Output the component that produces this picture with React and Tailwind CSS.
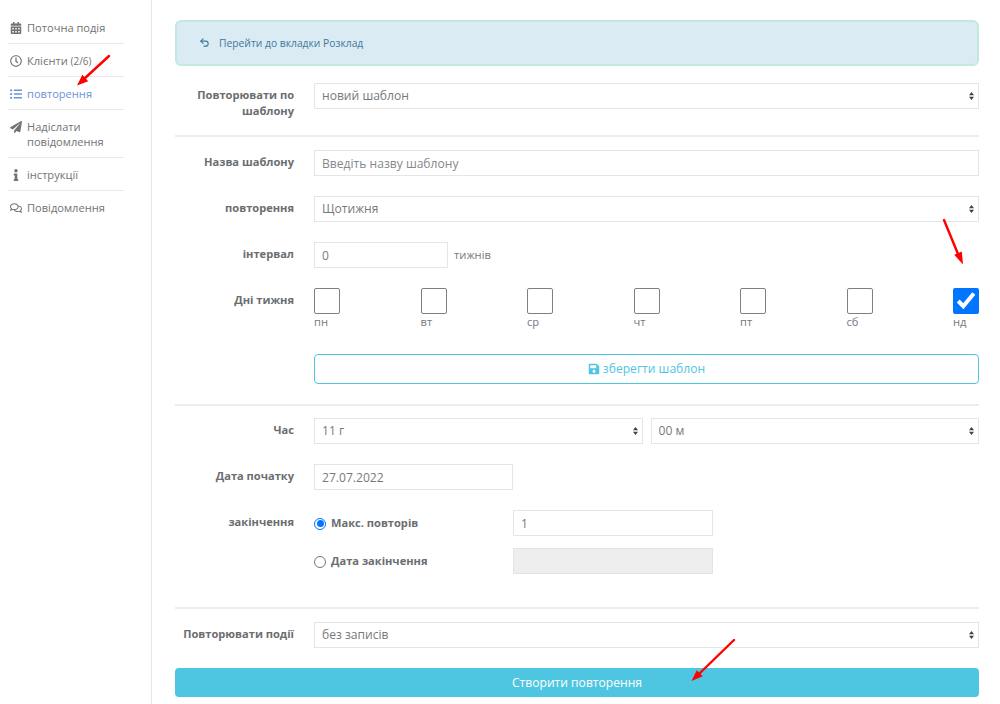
import { useState } from 'react'
import clsx from 'clsx'
import {
  FaCalendarAlt,
  FaInfo,
  FaListUl,
  FaPaperPlane,
  FaRegClock,
  FaRegComments,
  FaSave,
} from 'react-icons/fa'
import { Undo2 } from 'lucide-react'

const NAV_ITEMS = [
  { label: 'Поточна подія', icon: FaCalendarAlt, height: 'h-[33px]' },
  { label: 'Клієнти', note: '(2/6)', icon: FaRegClock, height: 'h-[33px]' },
  { label: 'повторення', icon: FaListUl, height: 'h-[33px]', active: true },
  { label: 'Надіслати повідомлення', icon: FaPaperPlane, height: 'h-[48px]' },
  { label: 'інструкції', icon: FaInfo, height: 'h-[33px]' },
  { label: 'Повідомлення', icon: FaRegComments, height: 'h-[33px]' },
]

const DAYS = ['пн', 'вт', 'ср', 'чт', 'пт', 'сб', 'нд']

const FIELD = 'block h-[26px] border border-[#e6e6e6] bg-white px-[7px] text-[12.1px] text-[#76797c] outline-none'

function Sidebar() {
  return (
    <nav className="w-[152px] shrink-0 border-r border-[#e7e7e7] pt-[11px] pl-2">
      <ul className="w-[116px]">
        {NAV_ITEMS.map(({ label, note, icon: Icon, height, active }) => (
          <li
            key={label}
            className={clsx(
              'flex border-b border-[#e9e9e9] pt-[9px] text-[11.1px] leading-[15px] last:border-b-0',
              height,
              active ? 'text-[#6f93d2]' : 'text-[#707376]',
            )}
          >
            <span className="flex h-[15px] w-[19px] shrink-0 items-center pl-0.5">
              <span className="flex w-3 justify-center">
                <Icon size={12} />
              </span>
            </span>
            <span>
              {label} {note ? <span className="text-[9.9px]">{note}</span> : null}
            </span>
          </li>
        ))}
      </ul>
    </nav>
  )
}

function Row({ label, className, children }) {
  return (
    <div className={clsx('flex', className)}>
      <div className="w-[119px] shrink-0 pt-1 text-right text-[11.1px] leading-4 font-bold text-[#6b6e71]">
        {label}
      </div>
      <div className="ml-5 min-w-0 flex-1">{children}</div>
    </div>
  )
}

function Select({ value }) {
  return (
    <div className="relative flex-1">
      <select className={clsx(FIELD, 'w-full appearance-none pt-px')} defaultValue={value}>
        <option>{value}</option>
      </select>
      <svg className="pointer-events-none absolute top-[9px] right-[5px]" width="5" height="8" viewBox="0 0 5 8" fill="#3f4245">
        <path d="M2.5 0 5 3.3H0zM2.5 8 0 4.7h5z" />
      </svg>
    </div>
  )
}

function DayBox({ label, checked, onToggle }) {
  return (
    <label className="block w-[26px] text-[11.2px] leading-4 text-[#76797c]">
      <input type="checkbox" className="peer sr-only" checked={checked} onChange={onToggle} />
      <span
        className={clsx(
          'flex h-[26px] w-[26px] items-center justify-center rounded-[2px]',
          checked ? 'bg-[#0075ff]' : 'border border-[#808080] bg-white',
        )}
      >
        {checked ? (
          <svg width="26" height="26" viewBox="0 0 26 26" fill="none" stroke="#fff" strokeWidth="4">
            <path d="M5.2 13 10.3 18.2 20.8 5.4" />
          </svg>
        ) : null}
      </span>
      <span className="block">{label}</span>
    </label>
  )
}

function Radio({ label, checked, onChange }) {
  return (
    <label className="flex w-[199px] items-center pt-px text-[11.1px] font-bold text-[#6b6e71]">
      <input type="radio" name="ending" className="sr-only" checked={checked} onChange={onChange} />
      <span
        className={clsx(
          'mr-[5px] flex h-3 w-3 items-center justify-center rounded-full border',
          checked ? 'border-[#0075ff]' : 'border-[#767676]',
        )}
      >
        {checked ? <span className="h-[7px] w-[7px] rounded-full bg-[#0075ff]" /> : null}
      </span>
      {label}
    </label>
  )
}

function Divider({ className }) {
  return <div className={clsx('h-0.5 bg-[#ececec]', className)} />
}

// Red pointers drawn over the page
function Arrows() {
  return (
    <svg
      className="pointer-events-none absolute inset-0"
      width="1000"
      height="704"
      viewBox="0 0 1000 704"
      fill="#fe0000"
      stroke="#fe0000"
      strokeLinecap="round"
    >
      <path d="M109 56 84 79M944 220 958 254M734 640 700 673" strokeWidth="2.4" />
      <path d="M77 85.5 82.4 74.8 88.2 81.2zM963 264.5 954.2 254.8 961.8 251.6zM691.5 681 696.8 670.2 702.7 676.2z" stroke="none" />
    </svg>
  )
}

function App() {
  const [days, setDays] = useState(['нд'])
  const [ending, setEnding] = useState('count')

  const toggleDay = (day) => {
    setDays((prev) => (prev.includes(day) ? prev.filter((d) => d !== day) : [...prev, day]))
  }

  return (
    <div className="relative flex h-[704px] w-[1000px] overflow-hidden bg-white font-['Open_Sans',sans-serif]">
      <Sidebar />

      <main className="ml-[23px] w-[804px] pt-5">
        <a
          href="#schedule"
          className="flex h-[46px] items-center rounded-md border-2 border-[#c3e8e0] bg-[#dbebf4] pl-[22px] text-[10.3px] text-[#41799b]"
        >
          <Undo2 size={11} strokeWidth={2.4} className="mr-[9px] mb-0.5" />
          <span className="pt-0.5">Перейти до вкладки Розклад</span>
        </a>

        <Row label="Повторювати по шаблону" className="mt-[17px] h-[26px]">
          <Select value="новий шаблон" />
        </Row>

        <Divider className="mt-[26px]" />

        <Row label="Назва шаблону" className="mt-[13px]">
          <input className={clsx(FIELD, 'w-full placeholder:text-[#85888a]')} placeholder="Введіть назву шаблону" />
        </Row>
        <Row label="повторення" className="mt-5">
          <Select value="Щотижня" />
        </Row>
        <Row label="інтервал" className="mt-5">
          <div className="flex items-center text-[11.2px] text-[#76797c]">
            <input className={clsx(FIELD, 'mr-1.5 w-[134px]')} defaultValue="0" />
            тижнів
          </div>
        </Row>
        <Row label="Дні тижня" className="mt-5">
          <div className="flex justify-between">
            {DAYS.map((day) => (
              <DayBox key={day} label={day} checked={days.includes(day)} onToggle={() => toggleDay(day)} />
            ))}
          </div>
          <button
            type="button"
            className="mt-6 flex h-[30px] w-full items-center justify-center rounded-[4px] border border-[#4fc6e1] text-[12.1px] text-[#4fc6e1]"
          >
            <FaSave size={12} className="mr-[3px]" />
            <span className="pt-px">зберегти шаблон</span>
          </button>
        </Row>

        <Divider className="mt-5" />

        <Row label="Час" className="mt-3">
          <div className="flex gap-2">
            <Select value="11 г" />
            <Select value="00 м" />
          </div>
        </Row>
        <Row label="Дата початку" className="mt-5">
          <input className={clsx(FIELD, 'w-[199px]')} defaultValue="27.07.2022" />
        </Row>
        <Row label="закінчення" className="mt-5">
          <div className="flex">
            <Radio label="Макс. повторів" checked={ending === 'count'} onChange={() => setEnding('count')} />
            <input className={clsx(FIELD, 'w-[200px]')} defaultValue="1" />
          </div>
          <div className="mt-3 flex">
            <Radio label="Дата закінчення" checked={ending === 'date'} onChange={() => setEnding('date')} />
            <input className="block h-[26px] w-[200px] border border-[#e4e4e4] bg-[#eeeeee]" disabled />
          </div>
        </Row>

        <Divider className="mt-[33px]" />

        <Row label="Повторювати події" className="mt-[13px]">
          <Select value="без записів" />
        </Row>

        <button
          type="button"
          className="mt-5 block h-[29px] w-full rounded-[4px] bg-[#4fc6e1] pt-0.5 text-[12.1px] text-white"
        >
          Створити повторення
        </button>
      </main>

      <Arrows />
    </div>
  )
}

export default App
